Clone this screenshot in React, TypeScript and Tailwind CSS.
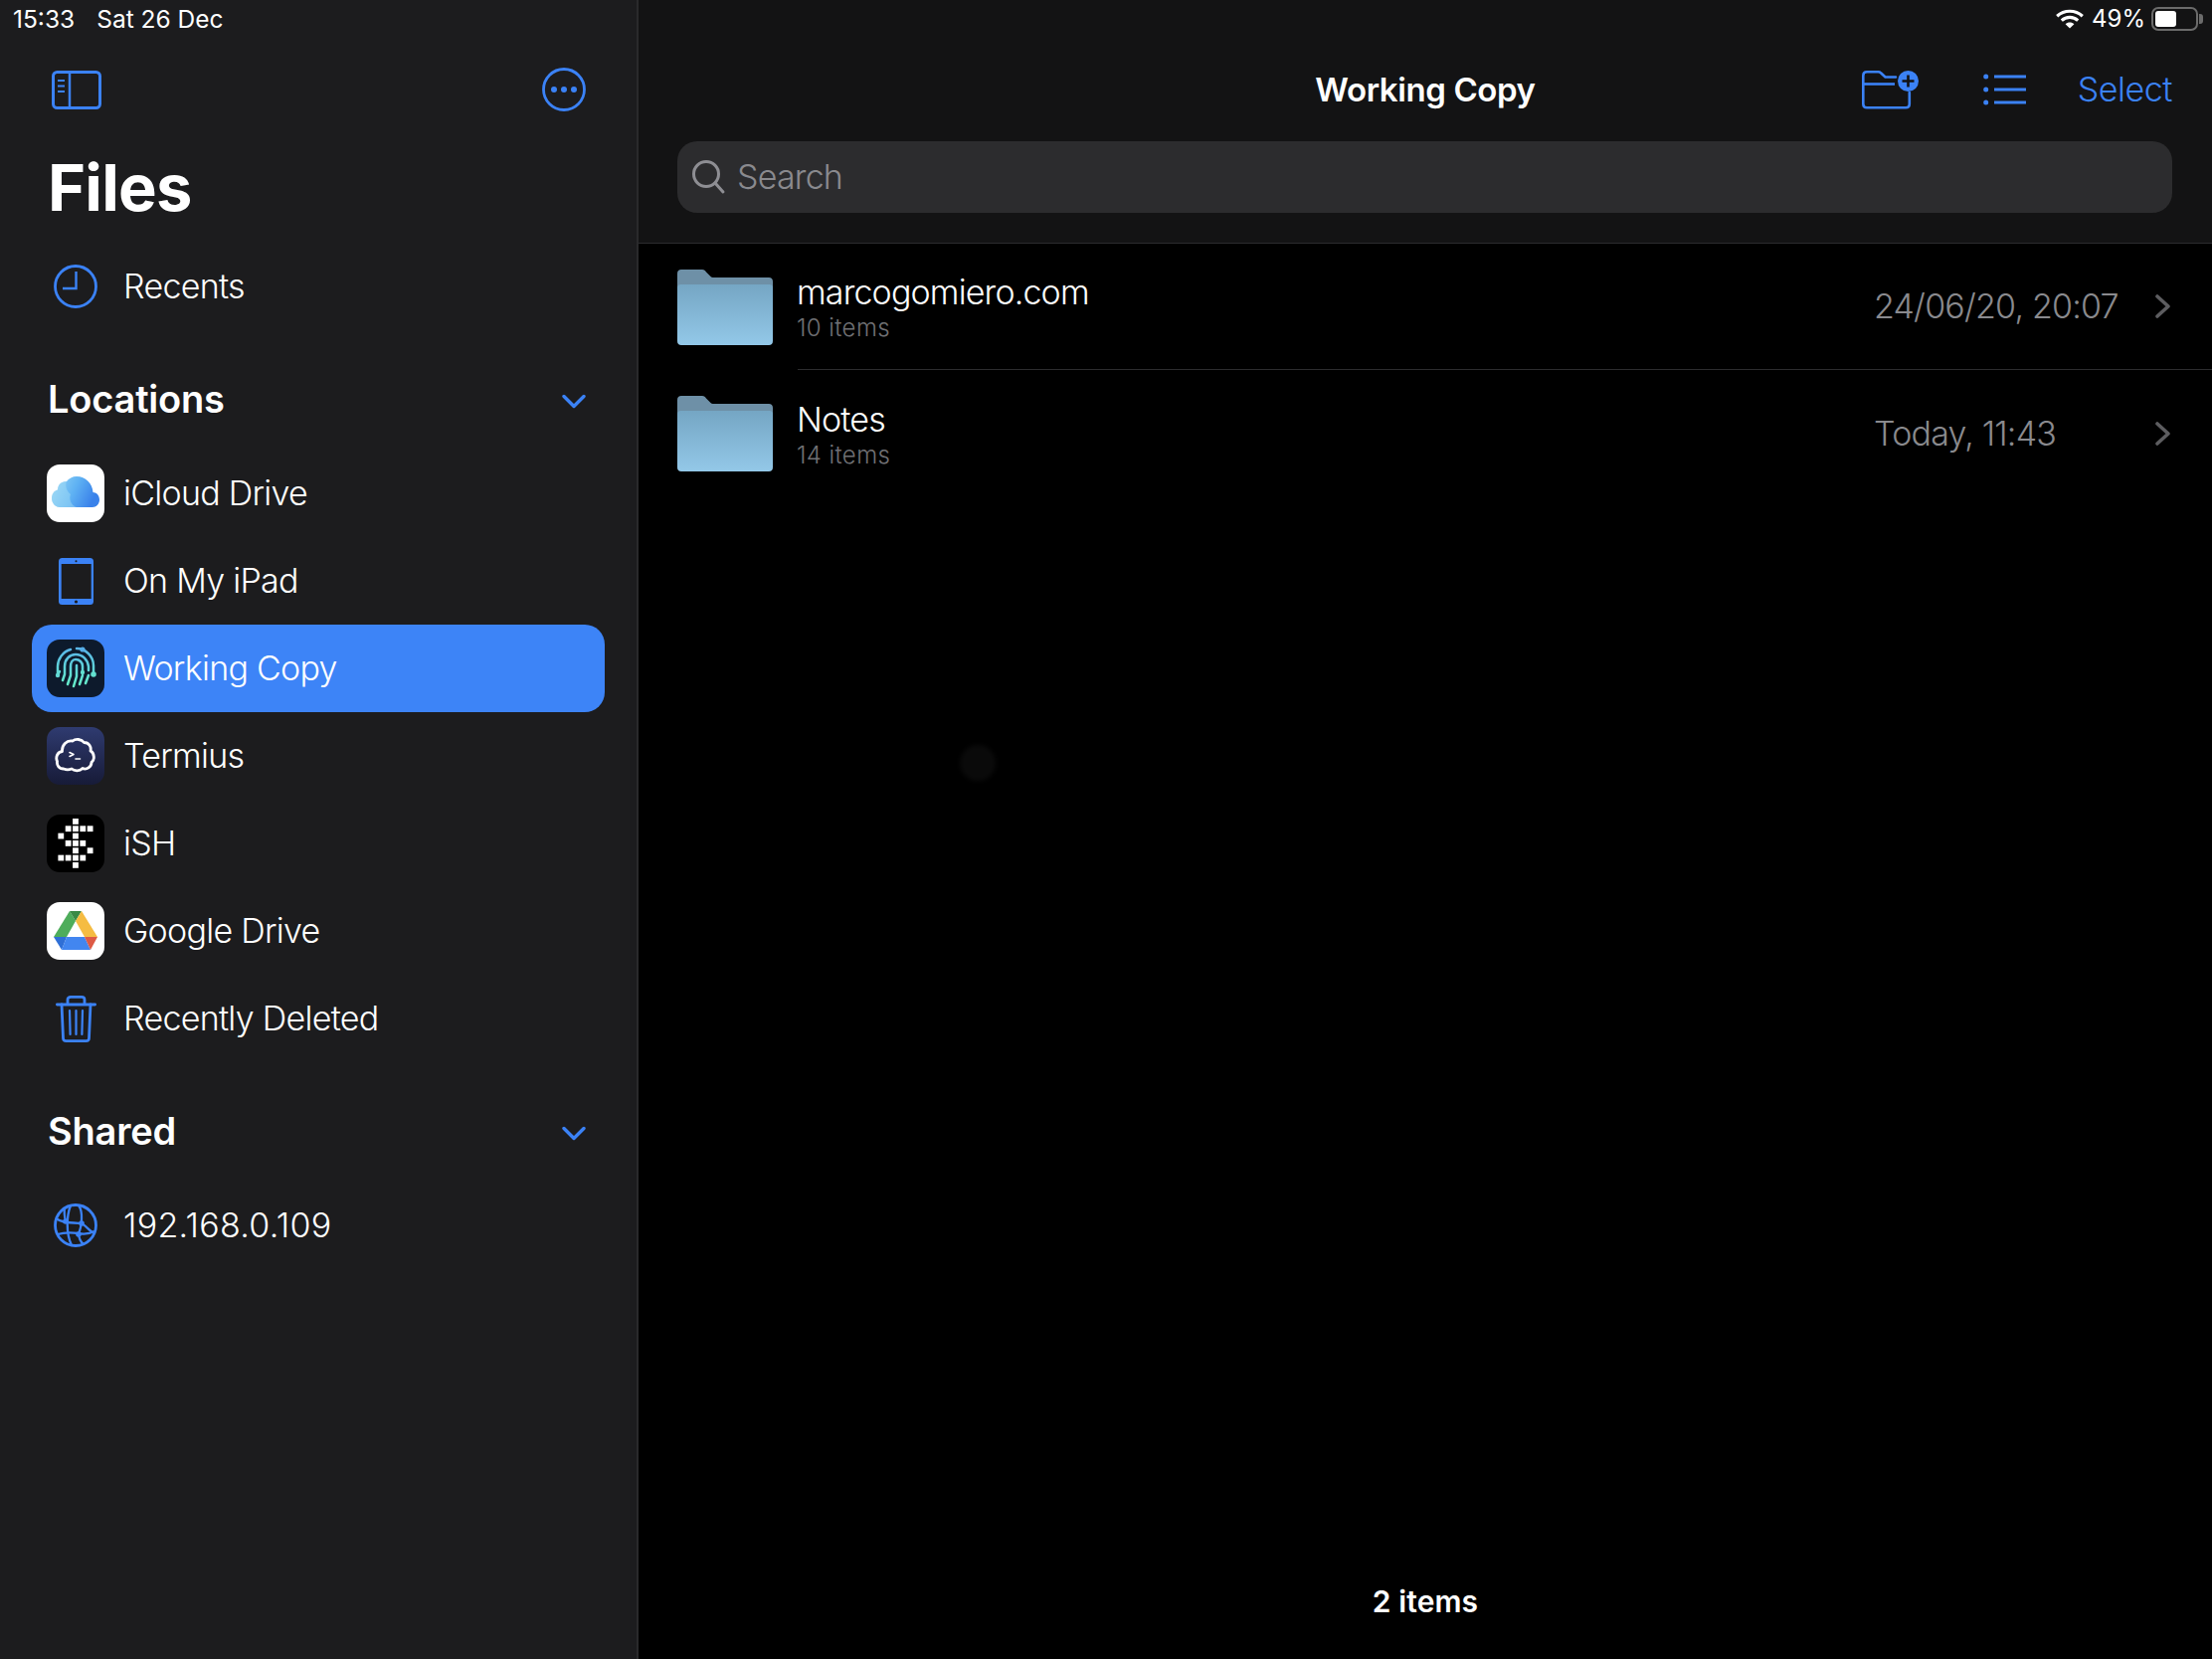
const SidebarIcon = () => (
  <svg width="50" height="39" viewBox="0 0 50 39" fill="none" stroke="#3b82f6" strokeWidth="3">
    <rect x="1.5" y="1.5" width="47" height="36" rx="4" />
    <path d="M18 1.5V37.5" strokeWidth="2.5" />
    <path d="M6 10H13M6 15.5H13M6 21H13" strokeWidth="2" />
  </svg>
);

const MoreIcon = () => (
  <svg width="44" height="44" viewBox="0 0 44 44" fill="none">
    <circle cx="22" cy="22" r="20.5" stroke="#3b82f6" strokeWidth="2.8" />
    <circle cx="12" cy="22" r="3" fill="#3b82f6" />
    <circle cx="22" cy="22" r="3" fill="#3b82f6" />
    <circle cx="32" cy="22" r="3" fill="#3b82f6" />
  </svg>
);

const ClockIcon = () => (
  <svg width="44" height="44" viewBox="0 0 44 44" fill="none" stroke="#3b82f6">
    <circle cx="22" cy="22" r="20.5" strokeWidth="2.8" />
    <path d="M22.5 7V24H9" strokeWidth="2.4" />
  </svg>
);

const ICloudIcon = () => (
  <div className="flex h-[58px] w-[58px] items-center justify-center rounded-[13px] bg-white">
    <svg width="58" height="58" viewBox="0 0 58 58">
      <defs>
        <linearGradient id="icloud" x1="0" y1="0" x2="1" y2="0.3">
          <stop offset="0" stopColor="#9bd8f5" />
          <stop offset="0.55" stopColor="#5fb2f3" />
          <stop offset="1" stopColor="#3a82ea" />
        </linearGradient>
      </defs>
      <path
        d="M13 43H46C50 43 53 39.5 53 35.5C53 31 50 28 46.5 28C46 19 39 12 30 12C26 12 22 14 20 17C14 17 11 21 11 25.5C7 26.5 5 30 5 34C5 39 9 43 13 43Z"
        fill="url(#icloud)"
      />
      <path d="M20 17C18.5 20 19 26 24 30C22 34 24 41 30 43H13C9 43 5 39 5 34C5 30 7 26.5 11 25.5C11 21 14 17 20 17Z" fill="#a9dff7" opacity="0.45" />
    </svg>
  </div>
);

const IPadIcon = () => (
  <svg width="35" height="47" viewBox="0 0 35 47">
    <rect width="35" height="47" rx="3.5" fill="#3b82f6" />
    <rect x="2.7" y="6" width="30" height="35" fill="#1c1c1e" />
    <circle cx="17.5" cy="3.2" r="1" fill="#1c1c1e" />
    <circle cx="17.5" cy="44" r="1.6" fill="#1c1c1e" />
  </svg>
);

const WorkingCopyIcon = () => (
  <div className="h-[58px] w-[58px] rounded-[13px] bg-[#0d1a2c]">
    <svg width="58" height="58" viewBox="0 0 58 58" fill="none" strokeWidth="2.5" strokeLinecap="round">
      <defs>
        <linearGradient id="print" gradientUnits="userSpaceOnUse" x1="29" y1="8" x2="29" y2="48">
          <stop offset="0" stopColor="#58b4ea" />
          <stop offset="1" stopColor="#66f0c8" />
        </linearGradient>
      </defs>
      <g stroke="url(#print)">
        <path d="M11 36V27C11 20 16 12 24 10" />
        <path d="M30 9C39 9 47 17 47 26V34" />
        <path d="M16 41L18 35V27C18 20 23 15 29 15C36 15 41 20 42 27V31" />
        <path d="M21 45L24 36V27C24 23 26 20 29 20C33 20 36 23 36 27V31" />
        <path d="M27 47L30 37V26" />
        <path d="M33 45L36 36" />
        <path d="M39 44L42 36" />
        <path d="M13 32L11 36" />
      </g>
      <circle cx="11" cy="36" r="2.2" fill="#62d8d6" />
      <circle cx="47" cy="35" r="2.8" fill="#62e0d0" />
      <circle cx="36" cy="10" r="2.6" fill="#56aee8" />
      <circle cx="36" cy="33" r="2.2" fill="#62e0d0" />
    </svg>
  </div>
);

const TermiusIcon = () => (
  <div className="h-[58px] w-[58px] rounded-[13px] bg-gradient-to-b from-[#2f3b70] to-[#171b38]">
    <svg width="58" height="58" viewBox="0 0 58 58" fill="none" stroke="#fff" strokeWidth="2.8" strokeLinecap="round" strokeLinejoin="round">
      <path d="M17 42C12 42 10 38 10.5 34.5C8.5 30 11 25 15.5 24.5C15 18 20 13 26 14C29 11.5 35 12 37.5 15.5C42.5 15.5 45 20 44 24C48 26 48.5 33 45 35.5C45 40 40 43.5 36 41.5C33 44.5 28 44.5 25 42C22.5 43 19.5 43 17 42Z" />
      <path d="M23 25.5L27 27.5L23 29.5" strokeWidth="1.6" />
      <path d="M29 32H33.5" strokeWidth="1.6" />
    </svg>
  </div>
);

const ishPixels = [
  [2, 0],
  [1, 1], [2, 1], [3, 1], [4, 1],
  [0, 2], [2, 2],
  [1, 3], [2, 3], [3, 3],
  [2, 4], [4, 4],
  [0, 5], [1, 5], [2, 5], [3, 5],
  [2, 6],
];

const IShIcon = () => (
  <div className="h-[58px] w-[58px] rounded-[13px] bg-black">
    <svg width="58" height="58" viewBox="0 0 58 58">
      {ishPixels.map(([c, r]) => (
        <rect key={`${c}-${r}`} x={11.4 + c * 7.33} y={4 + r * 7.33} width="5.8" height="5.8" fill="#fff" />
      ))}
    </svg>
  </div>
);

const GoogleDriveIcon = () => (
  <div className="h-[58px] w-[58px] rounded-[13px] bg-white">
    <svg width="58" height="58" viewBox="0 0 58 58">
      <polygon points="23,9 29,19 20,35 7,35" fill="#4ead5b" />
      <polygon points="23,9 35,9 29,19" fill="#3a8a45" />
      <polygon points="35,9 51,35 38,35 29,19" fill="#f5bc42" />
      <polygon points="7,35 20,35 15,48" fill="#2f6fd6" />
      <polygon points="20,35 38,35 44,48 15,48" fill="#4286f0" />
      <polygon points="38,35 51,35 44,48" fill="#dd5a45" />
    </svg>
  </div>
);

const TrashIcon = () => (
  <svg width="41" height="47" viewBox="0 0 41 47" fill="none" stroke="#3b82f6" strokeWidth="2.8" strokeLinejoin="round" strokeLinecap="round">
    <path d="M12 8V4C12 2.3 13.3 1.4 15 1.4H26C27.7 1.4 29 2.3 29 4V8" />
    <path d="M1.4 9H39.6" />
    <path d="M6 9L7.5 43C7.6 44.8 8.8 45.6 10.5 45.6H30.5C32.2 45.6 33.4 44.8 33.5 43L35 9" />
    <path d="M14 15L14.6 39M20.5 15V39M27 15L26.4 39" strokeWidth="2.2" />
  </svg>
);

const GlobeIcon = () => (
  <svg width="44" height="44" viewBox="0 0 44 44" fill="none" stroke="#3b82f6" strokeWidth="2.3">
    <circle cx="22" cy="22" r="20.5" strokeWidth="2.8" />
    <path d="M17 2C13 12 12 30 18 42" />
    <path d="M25 2C30 8 28 24 25 30C25 34 27 39 30 41" />
    <path d="M2 15C8 19 12 19 28 20C32 22 37 29 41 30" />
    <path d="M4 31C10 29 18 29 25 30C30 31 35 31 41 28" />
    <path d="M11 4C10 10 11 14 12 18" />
    <circle cx="12" cy="18" r="2.8" fill="#3b82f6" stroke="none" />
    <circle cx="28" cy="20" r="2.8" fill="#3b82f6" stroke="none" />
    <circle cx="25" cy="31" r="2.8" fill="#3b82f6" stroke="none" />
  </svg>
);

const WifiIcon = () => (
  <svg width="28" height="20" viewBox="0 0 28 20" fill="none" stroke="#fff" strokeWidth="3.2">
    <path d="M1.2 7.2C8.5 0.6 19.5 0.6 26.8 7.2" />
    <path d="M5.8 11.6C10.6 7.4 17.4 7.4 22.2 11.6" />
    <path d="M14 19.5L9.6 15.2C12 13 16 13 18.4 15.2Z" fill="#fff" stroke="none" />
  </svg>
);

const NewFolderIcon = () => (
  <svg width="58" height="39" viewBox="0 0 58 39" fill="none">
    <path
      d="M34 6.5H23.5L19 2.3C18.3 1.6 17.6 1.3 16.5 1.3H5C2.8 1.3 1.3 2.8 1.3 5V33.5C1.3 35.8 2.8 37.3 5 37.3H44C46.2 37.3 47.8 35.8 47.8 33.5V22"
      stroke="#3b82f6"
      strokeWidth="2.6"
      strokeLinecap="round"
    />
    <path d="M1.3 13.5H33" stroke="#3b82f6" strokeWidth="2.6" />
    <circle cx="46.5" cy="10.5" r="10.5" fill="#3b82f6" />
    <path d="M46.5 4.5V16.5M40.5 10.5H52.5" stroke="#131314" strokeWidth="2.6" />
  </svg>
);

const ListIcon = () => (
  <svg width="44" height="32" viewBox="0 0 44 32" fill="none">
    <circle cx="2.7" cy="3" r="2.5" fill="#3b82f6" />
    <circle cx="2.7" cy="16" r="2.5" fill="#3b82f6" />
    <circle cx="2.7" cy="29" r="2.5" fill="#3b82f6" />
    <path d="M11 3H43M11 16H43M11 29H43" stroke="#3b82f6" strokeWidth="3" />
  </svg>
);

const SearchIcon = () => (
  <svg width="36" height="36" viewBox="0 0 36 36" fill="none" stroke="#8e8e93" strokeWidth="3" strokeLinecap="round">
    <circle cx="15" cy="15" r="12.5" />
    <path d="M24 24L32 33" />
  </svg>
);

const FolderIcon = ({ id }: { id: string }) => (
  <svg width="96" height="76" viewBox="0 0 96 76">
    <defs>
      <linearGradient id={id} x1="0" y1="0" x2="0" y2="1">
        <stop offset="0" stopColor="#75a6c4" />
        <stop offset="1" stopColor="#93c8e8" />
      </linearGradient>
    </defs>
    <path d="M0 4C0 1.5 1.5 0 4 0H25C27 0 28 1 29 2.5L33 6.5C34 7.6 35 8 37 8H92C94.5 8 96 9.5 96 12V30H0Z" fill="#6e90a7" />
    <path d="M0 18C0 16 1.5 15 3.5 15H92.5C94.5 15 96 16 96 18V72C96 74.5 94.5 76 92 76H4C1.5 76 0 74.5 0 72Z" fill={`url(#${id})`} />
  </svg>
);

const DownChevron = () => (
  <svg width="24" height="15" viewBox="0 0 24 15" fill="none" stroke="#3b82f6" strokeWidth="3.4" strokeLinecap="round" strokeLinejoin="round" className="mt-[5px]">
    <path d="M2 2.5L12 12.5L22 2.5" />
  </svg>
);

const RowChevron = () => (
  <svg width="15" height="24" viewBox="0 0 15 24" fill="none" stroke="#5d5d60" strokeWidth="3.6" strokeLinecap="round" strokeLinejoin="round">
    <path d="M2 2L13 12L2 22" />
  </svg>
);

type Item = {
  label: string;
  icon: React.ReactNode;
  active?: boolean;
  numeric?: boolean;
};

const locations: Item[] = [
  { label: 'iCloud Drive', icon: <ICloudIcon /> },
  { label: 'On My iPad', icon: <IPadIcon /> },
  { label: 'Working Copy', icon: <WorkingCopyIcon />, active: true },
  { label: 'Termius', icon: <TermiusIcon /> },
  { label: 'iSH', icon: <IShIcon /> },
  { label: 'Google Drive', icon: <GoogleDriveIcon /> },
  { label: 'Recently Deleted', icon: <TrashIcon /> },
];

const SidebarRow = ({ label, icon, active, numeric }: Item) => (
  <div className={`mx-[32px] flex h-[88px] items-center gap-[19px] rounded-[20px] pl-[15px] ${active ? 'bg-[#3d84f7]' : ''}`}>
    <div className="flex w-[58px] shrink-0 items-center justify-center">{icon}</div>
    <span className={`text-[34px] font-[350] leading-none text-white ${numeric ? 'tracking-[0.3px]' : 'tracking-[-0.72px]'}`}>{label}</span>
  </div>
);

const SectionHeader = ({ title }: { title: string }) => (
  <div className="mt-[29px] flex h-[80px] items-center justify-between pl-[48px] pr-[51px]">
    <span className="text-[38px] font-semibold leading-none tracking-[-0.2px] text-white">{title}</span>
    <DownChevron />
  </div>
);

const files = [
  { name: 'marcogomiero.com', count: '10 items', date: '24/06/20, 20:07' },
  { name: 'Notes', count: '14 items', date: 'Today, 11:43' },
];

export default function App() {
  return (
    <div className="relative flex h-[1668px] w-[2224px] overflow-hidden bg-black [font-family:Inter,sans-serif]">
      {/* Sidebar */}
      <aside className="flex w-[642px] shrink-0 flex-col border-r-2 border-[#2a2a2c] bg-[#1c1c1e]">
        <div className="flex h-[38px] items-center gap-[22px] pl-[13px] text-[24.5px] leading-none text-white">
          <span>15:33</span>
          <span>Sat 26 Dec</span>
        </div>
        <div className="flex h-[104px] items-center justify-between pl-[52px] pr-[51px]">
          <SidebarIcon />
          <MoreIcon />
        </div>
        <div className="flex h-[92px] items-center pl-[48px] text-[65px] font-bold leading-none tracking-[-0.8px] text-white">Files</div>
        <div className="mt-[10px]">
          <SidebarRow label="Recents" icon={<ClockIcon />} />
        </div>
        <SectionHeader title="Locations" />
        <div className="mt-[11px] flex flex-col">
          {locations.map((item) => (
            <SidebarRow key={item.label} {...item} />
          ))}
        </div>
        <SectionHeader title="Shared" />
        <div className="mt-[11px]">
          <SidebarRow label="192.168.0.109" icon={<GlobeIcon />} numeric />
        </div>
      </aside>

      {/* Main */}
      <main className="flex min-w-0 flex-1 flex-col">
        <header className="h-[245px] border-b border-[#2c2c2e] bg-[#131314]">
          <div className="flex h-[38px] items-center justify-end pr-[9px]">
            <WifiIcon />
            <span className="ml-[8px] text-[24px] leading-none text-white">49%</span>
            <div className="ml-[6px] flex h-[24px] w-[47px] items-center rounded-[7px] border-2 border-[#6b6b6b] p-[2px]">
              <div className="h-full w-[21px] rounded-[3px] bg-white" />
            </div>
            <div className="ml-[1px] h-[10px] w-[4px] rounded-r-[3px] bg-[#6b6b6b]" />
          </div>
          <div className="grid h-[104px] grid-cols-3 items-center">
            <div />
            <div className="text-center text-[33px] font-semibold leading-none tracking-[-0.4px] text-white">Working Copy</div>
            <div className="flex items-center justify-end pr-[40px]">
              <NewFolderIcon />
              <div className="ml-[64px]">
                <ListIcon />
              </div>
              <span className="ml-[51px] text-[34px] font-[350] leading-none tracking-[-0.45px] text-[#3b82f6]">Select</span>
            </div>
          </div>
          <div className="ml-[39px] mr-[40px] flex h-[72px] items-center rounded-[20px] bg-[#2c2c2e] pl-[14px]">
            <SearchIcon />
            <span className="ml-[10px] text-[34px] font-[350] leading-none tracking-[-0.8px] text-[#8a8a8e]">Search</span>
          </div>
        </header>

        <div className="flex-1">
          {files.map((file, index) => (
            <div key={file.name} className={`flex items-center pl-[39px] ${index === 0 ? 'h-[127px]' : 'h-[128px]'}`}>
              <FolderIcon id={`folder-${index}`} />
              <div className={`ml-[25px] flex h-full flex-1 items-center pr-[42px] ${index === 0 ? 'border-b border-[#2c2c2e]' : ''}`}>
                <div className="ml-[-1px] flex-1 pt-[3px]">
                  <div className="text-[34px] font-[350] leading-[40px] tracking-[-0.85px] text-white">{file.name}</div>
                  <div className="text-[24px] font-[350] leading-[32px] tracking-[0.4px] text-[#707074]">{file.count}</div>
                </div>
                <span className="w-[283px] text-[34px] font-[350] leading-none tracking-[-0.8px] text-[#8a8a8e]">{file.date}</span>
                <RowChevron />
              </div>
            </div>
          ))}
        </div>

        <div className="flex h-[116px] items-center justify-center text-[30px] font-semibold leading-none tracking-[0.1px] text-white">2 items</div>
      </main>

      {/* faint touch indicator over the list */}
      <div className="absolute left-[965px] top-[749px] h-[36px] w-[36px] rounded-full bg-[#0a0a0a] blur-[2px]" />
    </div>
  );
}
